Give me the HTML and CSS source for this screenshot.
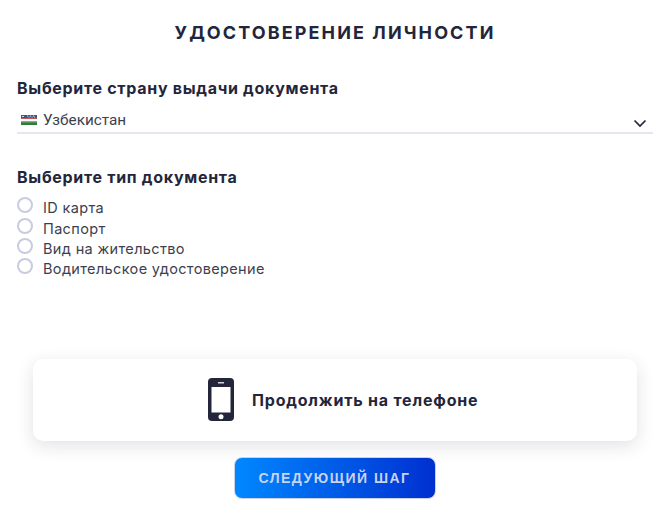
FILE: index.html
```html
<!DOCTYPE html>
<html lang="ru">
<head>
<meta charset="utf-8">
<title>Удостоверение личности</title>
<link rel="stylesheet" href="styles.css">
</head>
<body>
<main class="page">
  <h1 class="title">УДОСТОВЕРЕНИЕ ЛИЧНОСТИ</h1>
  <section class="country">
    <h2 class="heading">Выберите страну выдачи документа</h2>
    <div class="select">
      <svg class="flag" width="16" height="10" viewBox="0 0 16 10">
        <rect width="16" height="3.200" fill="#2c5f86"/>
        <path d="M1 1.500h2M6 1h1M9 1h1M12 1h1M7.500 2h1M10.500 2h1M13 2h1" stroke="#fff" stroke-width=".8"/>
        <rect y="3.200" width="16" height=".8" fill="#c8313e"/>
        <rect y="4" width="16" height="2.400" fill="#fff"/>
        <rect y="6.400" width="16" height=".8" fill="#c8313e"/>
        <rect y="7.200" width="16" height="2.800" fill="#2c7d3c"/>
      </svg>
      <span class="select-value">Узбекистан</span>
      <svg class="chevron" width="14" height="9" viewBox="0 0 14 9"><path d="M1.500 1.500 7 7l5.500-5.500" fill="none" stroke="#23263b" stroke-width="1.700"/></svg>
    </div>
  </section>
  <section class="types">
    <h2 class="heading">Выберите тип документа</h2>
    <ul class="options">
      <li class="option"><span class="radio"></span><span class="option-label">ID карта</span></li>
      <li class="option"><span class="radio"></span><span class="option-label">Паспорт</span></li>
      <li class="option"><span class="radio"></span><span class="option-label">Вид на жительство</span></li>
      <li class="option"><span class="radio"></span><span class="option-label">Водительское удостоверение</span></li>
    </ul>
  </section>
  <div class="phone-card">
    <svg class="phone" width="26" height="43" viewBox="0 0 26 43">
      <rect width="26" height="43" rx="4" fill="#23263b"/>
      <rect x="3.500" y="9" width="19" height="25.500" fill="#fff"/>
      <rect x="10" y="4.200" width="6" height="1.200" fill="#fff"/>
      <circle cx="13" cy="38.700" r="2.500" fill="#fff"/>
    </svg>
    <span class="phone-text">Продолжить на телефоне</span>
  </div>
  <div class="actions"><button class="next" type="button">СЛЕДУЮЩИЙ ШАГ</button></div>
</main>
</body>
</html>
```
FILE: styles.css
```css
* { box-sizing: border-box; }
html, body { margin: 0; padding: 0; background: #fff; }
body { width: 670px; height: 526px; overflow: hidden; font-family: "Inter", "Open Sans", sans-serif; color: #23263b; }
.page { padding: 21px 17px 0; display: flex; flex-direction: column; }
.title { margin: 0; font-size: 18px; line-height: 24px; font-weight: 700; letter-spacing: 2.100px; text-align: center; }
.heading { margin: 0; font-size: 16px; line-height: 20px; font-weight: 700; letter-spacing: .7px; }
.country { margin-top: 33px; }
.select { display: flex; align-items: center; height: 26px; margin-top: 9.500px; padding: 0 0 0 4px; border-bottom: 2px solid #e6e6f2; width: 636px; }
.flag { flex: none; }
.select-value { margin: 1px 0 0 6px; font-family: "Roboto", sans-serif; font-size: 15.300px; color: #3c3f50; flex: 1; }
.chevron { flex: none; margin: 7px 6px 0 0; }
.types { margin-top: 33.500px; }
.options { list-style: none; margin: 10.500px 0 0; padding: 0; }
.option { display: flex; align-items: center; height: 20.400px; }
.radio { flex: none; width: 16px; height: 16px; border-radius: 50%; border: 2px solid #c9cbe0; background: #fff; margin: -5px 10px 0 0; }
.option-label { font-size: 14.500px; letter-spacing: .35px; color: #3c3f50; }
.phone-card { display: flex; align-items: center; gap: 18px; margin: 79.500px 16px 0; padding-left: 175px; height: 82px; width: 604px; border-radius: 10px; background: #fff; box-shadow: 0 5px 18px rgba(30, 30, 60, .13); }
.phone-text { font-size: 16px; font-weight: 700; letter-spacing: .8px; }
.actions { display: flex; justify-content: center; margin-top: 16px; }
.next { width: 202px; height: 42px; margin-right: 1px; border: 1px solid #c9d2ea; border-radius: 8px; background: linear-gradient(90deg, #0088ff, #0030d0); color: #c9d3ee; font-family: "Liberation Sans", sans-serif; font-size: 14px; font-weight: 700; letter-spacing: 1.500px; }
```
